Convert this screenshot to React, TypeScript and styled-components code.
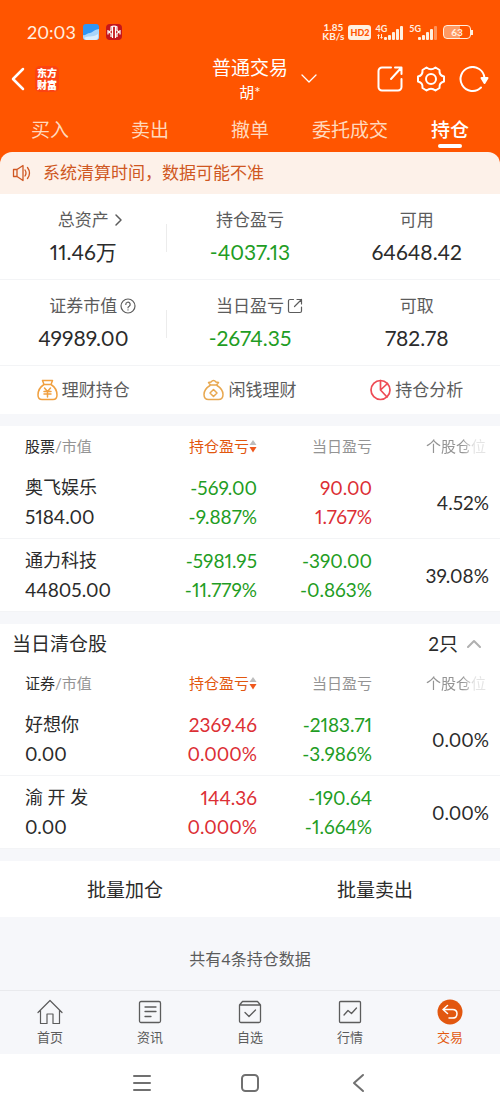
import React from 'react';
import styled, { createGlobalStyle, css } from 'styled-components';

const color = {
  brand: '#ff5500',
  accent: '#e2570f',
  ink: '#2b2b2b',
  sub: '#5c5c5c',
  muted: '#949494',
  up: '#dc2f35',
  down: '#1f9d24',
  page: '#f6f7fa',
  line: '#f3f4f6',
};

const GlobalStyle = createGlobalStyle`
  *, *::before, *::after { box-sizing: border-box; }
  body {
    margin: 0;
    background: #fff;
    color: ${color.ink};
    font-family: Lato, "Noto Sans CJK SC", sans-serif;
    font-variant-numeric: proportional-nums;
  }
  button {
    margin: 0;
    padding: 0;
    border: 0;
    background: none;
    color: inherit;
    font: inherit;
    cursor: pointer;
  }
  a { color: inherit; text-decoration: none; }
  svg { display: block; flex: none; }
`;

type Tone = 'up' | 'down' | 'plain';

const toneColor = (tone: Tone) =>
  tone === 'up' ? color.up : tone === 'down' ? color.down : color.ink;

const Page = styled.div`
  background: ${color.page};
`;

const Top = styled.header`
  background: ${color.brand};
  color: #fff;
  padding-bottom: 12px;
`;

const StatusBar = styled.div`
  display: flex;
  align-items: center;
  justify-content: space-between;
  height: 54px;
  padding: 10px 27px 0;
  color: #fff0e0;
`;

const StatusGroup = styled.div<{ $gap: number }>`
  display: flex;
  align-items: center;
  gap: ${(p) => p.$gap}px;
`;

const Clock = styled.time`
  font-size: 18px;
  line-height: 22px;
`;

const Speed = styled.span`
  font: 700 10px/9px Lato, sans-serif;
  text-align: center;
`;

const HdBadge = styled.span`
  padding: 0 2px;
  border-radius: 3px;
  background: #fff0e0;
  color: ${color.brand};
  font: 900 9px/15px Lato, sans-serif;
`;

const Signal = styled.span`
  display: flex;
  align-items: flex-start;
  height: 15px;
  font: 700 9px/8px Lato, sans-serif;

  svg { margin: 1px 0 0 -10px; }
`;

const Battery = styled.span`
  display: flex;
  align-items: center;

  &::after {
    content: '';
    width: 2px;
    height: 5px;
    background: #fff0e0;
  }
`;

const BatteryBody = styled.span`
  width: 28px;
  border: 1px solid #fff0e0;
  border-radius: 4px;
  background: linear-gradient(90deg, #ff9a63 63%, transparent 63%);
  font: 700 10px/12px Lato, sans-serif;
  text-align: center;
`;

const TitleBar = styled.div`
  display: grid;
  grid-template-columns: 1fr auto 1fr;
  align-items: center;
  height: 49px;
  padding: 0 11px;
`;

const TitleSide = styled.div`
  display: flex;
  align-items: center;
  gap: 10px;
`;

const Logo = styled.span`
  display: flex;
  flex-direction: column;
  padding: 1px 2px;
  border-radius: 5px;
  background: #fb4312;
  font: 900 10px/12px "Noto Sans CJK SC", sans-serif;
`;

const Title = styled.h1`
  margin: 0;
  font-size: 19px;
  font-weight: 400;
  line-height: 26px;
  text-align: center;
`;

const Account = styled.small`
  display: block;
  font-size: 15px;
  line-height: 22px;
`;

const TitleActions = styled.div`
  display: flex;
  align-items: center;
  gap: 14px;

  > :first-child { margin: 0 auto 0 13px; }
`;

const Tabs = styled.nav`
  display: grid;
  grid-template-columns: repeat(5, 1fr);
  padding-top: 13px;
`;

const Tab = styled.a<{ $active?: boolean }>`
  display: flex;
  flex-direction: column;
  align-items: center;
  height: 36px;
  color: ${(p) => (p.$active ? '#fff' : '#ffd9bd')};
  font-size: 19px;
  font-weight: ${(p) => (p.$active ? 500 : 400)};
  line-height: 28px;

  &::after {
    content: '';
    width: 24px;
    height: 4px;
    border-radius: 2px;
    background: ${(p) => (p.$active ? '#fff' : 'transparent')};
  }
`;

const Notice = styled.div`
  display: flex;
  align-items: center;
  gap: 12px;
  height: 42px;
  margin-top: -12px;
  padding: 0 12px;
  border-radius: 12px 12px 0 0;
  background: #fdf1e9;
  color: #cf5722;
  font-size: 17px;
  line-height: 24px;
`;

const Card = styled.section`
  margin-bottom: 12px;
  background: #fff;
`;

const SummaryRow = styled.div`
  display: grid;
  grid-template-columns: repeat(3, 1fr);
  height: 86px;
  padding-top: 13px;
  border-bottom: 1px solid ${color.line};
`;

const Metric = styled.div`
  position: relative;
  display: flex;
  flex-direction: column;
  align-items: center;

  &:first-child::after {
    content: '';
    position: absolute;
    top: 17px;
    right: 0;
    width: 1px;
    height: 28px;
    background: #ececec;
  }
`;

const MetricLabel = styled.span`
  display: flex;
  align-items: center;
  color: ${color.sub};
  font-size: 17px;
  line-height: 26px;

  svg { margin: 0 -19px 0 3px; }
`;

const MetricValue = styled.strong<{ $tone: Tone }>`
  margin-top: 4px;
  color: ${(p) => toneColor(p.$tone)};
  font-size: 21px;
  font-weight: 400;
  line-height: 30px;
`;

const Shortcuts = styled.nav`
  display: grid;
  grid-template-columns: repeat(3, 1fr);
  height: 48px;
`;

const Shortcut = styled.a`
  display: flex;
  align-items: center;
  justify-content: center;
  gap: 4px;
  color: ${color.sub};
  font-size: 17px;
  line-height: 24px;
`;

const GroupHeading = styled.div`
  display: flex;
  align-items: center;
  justify-content: space-between;
  height: 39px;
  padding: 0 19px 0 12px;
`;

const GroupTitle = styled.h2`
  margin: 0;
  font-size: 19px;
  font-weight: 400;
  line-height: 28px;
`;

const GroupToggle = styled.button`
  display: flex;
  align-items: center;
  gap: 9px;
  font-size: 19px;
  line-height: 28px;
`;

const Table = styled.table`
  width: 100%;
  table-layout: fixed;
  border-collapse: separate;
  border-spacing: 0;
`;

const cell = css`
  padding: 7px 0;
  font-weight: 400;
  text-align: right;
  white-space: nowrap;

  &:first-child { padding-left: 25px; text-align: left; }
  &:last-child { padding-right: 11px; }
`;

const HeadCell = styled.th<{ $width: string }>`
  ${cell}
  width: ${(p) => p.$width};
  height: 40px;
  color: ${color.muted};
  font-size: 15px;
  line-height: 26px;

  b { color: ${color.ink}; font-weight: 400; }
  &:last-child { padding-right: 14px; }
`;

const SortButton = styled.button`
  display: inline-flex;
  align-items: center;
  color: ${color.accent};
`;

const Faded = styled.span`
  mask-image: linear-gradient(90deg, #000 60%, rgba(0, 0, 0, 0.25) 80%);
`;

const Cell = styled.td<{ $tone?: Tone }>`
  ${cell}
  border-bottom: 1px solid ${color.line};
  color: ${(p) => toneColor(p.$tone ?? 'plain')};
  font-size: 19px;
  line-height: 29px;
`;

const Line = styled.div`
  line-height: 29px;
`;

const StockName = styled.div`
  font-size: 18px;
  line-height: 29px;
  white-space: pre;
`;

const BatchActions = styled.div`
  display: grid;
  grid-template-columns: 1fr 1fr;
  background: #fff;

  button {
    height: 56px;
    padding-bottom: 2px;
    font-size: 19px;
  }
`;

const Footnote = styled.p`
  margin: 0;
  padding: 30px 0 19px;
  color: ${color.sub};
  font-size: 16px;
  line-height: 24px;
  text-align: center;
`;

const BottomNav = styled.nav`
  display: grid;
  grid-template-columns: repeat(5, 1fr);
  border-top: 1px solid #e9eaed;
`;

const BottomItem = styled.a<{ $active?: boolean }>`
  display: flex;
  flex-direction: column;
  align-items: center;
  gap: 3px;
  height: 63px;
  padding-top: 8px;
  color: ${(p) => (p.$active ? color.accent : color.sub)};
  font-size: 13px;
  line-height: 18px;
`;

const SystemNav = styled.div`
  display: flex;
  align-items: center;
  justify-content: center;
  gap: 88px;
  height: 57px;
  background: #fff;
  color: #707070;
`;

const Icon = ({
  w,
  h = w,
  sw = 1.5,
  stroke = 'currentColor',
  children,
}: {
  w: number;
  h?: number;
  sw?: number;
  stroke?: string;
  children: React.ReactNode;
}) => (
  <svg
    width={w}
    height={h}
    viewBox={`0 0 ${w} ${h}`}
    fill="none"
    stroke={stroke}
    strokeWidth={sw}
    strokeLinecap="round"
    strokeLinejoin="round"
    aria-hidden="true"
  >
    {children}
  </svg>
);

const WeatherIcon = () => (
  <svg width="16" height="16" viewBox="0 0 16 16" aria-hidden="true">
    <rect width="16" height="16" rx="3" fill="#2f95f3" />
    <path d="M0 11c3 1 4-2 7-2 2 0 3-3 9-4v8a3 3 0 0 1-3 3H3a3 3 0 0 1-3-3z" fill="#a9d5fa" />
    <path d="M1 14c4-3 8 0 14-4v3a3 3 0 0 1-3 3H3z" fill="#dceefc" />
  </svg>
);

const BankIcon = () => (
  <svg width="16" height="16" viewBox="0 0 16 16" fill="none" stroke="#fff" aria-hidden="true">
    <rect width="16" height="16" rx="4" fill="#c4161c" stroke="none" />
    <path d="M6.500 3v11M9.500 3v11M5 3.500v3L3 8l2 1.500V13M11 3.500v3L13 8l-2 1.500V13M2 6v4.500M14 6v4.500M4.500 3.200q3.500-2 7 0" strokeWidth="1.200" />
  </svg>
);

const SignalBars = ({ weak }: { weak?: boolean }) => (
  <svg width="28" height="14" viewBox="0 0 28 14" fill="#fff0e0" aria-hidden="true">
    <rect x="7" y="11" width="3" height="3" rx="1" />
    <rect x="11" y="9" width="3" height="5" rx="1" />
    <rect x="15" y="6" width="3" height="8" rx="1" />
    <rect x="19" y="3" width="3" height="11" rx="1" />
    <rect x="23" y="0" width="3" height="14" rx="1" opacity={weak ? 0.4 : 1} />
    {!weak && <path d="M0 10l1.500-2L3 10H2v3H1v-3zM3 11h1V8h1v3h1l-1.500 2z" />}
  </svg>
);

const SortIcon = () => (
  <svg width="8" height="16" viewBox="0 0 8 16" aria-hidden="true">
    <path d="M4 2l3.500 5h-7z" fill="#bdbdbd" />
    <path d="M.5 9h7L4 14.500z" fill="#f0571c" />
  </svg>
);

type Pair = { value: string; rate: string; tone: Tone };
type Holding = { name: string; market: string; total: Pair; day: Pair; share: string };

const holdings: Holding[] = [
  {
    name: '奥飞娱乐',
    market: '5184.00',
    total: { value: '-569.00', rate: '-9.887%', tone: 'down' },
    day: { value: '90.00', rate: '1.767%', tone: 'up' },
    share: '4.52%',
  },
  {
    name: '通力科技',
    market: '44805.00',
    total: { value: '-5981.95', rate: '-11.779%', tone: 'down' },
    day: { value: '-390.00', rate: '-0.863%', tone: 'down' },
    share: '39.08%',
  },
];

const cleared: Holding[] = [
  {
    name: '好想你',
    market: '0.00',
    total: { value: '2369.46', rate: '0.000%', tone: 'up' },
    day: { value: '-2183.71', rate: '-3.986%', tone: 'down' },
    share: '0.00%',
  },
  {
    name: '渝 开 发',
    market: '0.00',
    total: { value: '144.36', rate: '0.000%', tone: 'up' },
    day: { value: '-190.64', rate: '-1.664%', tone: 'down' },
    share: '0.00%',
  },
];

const PairCell = ({ pair }: { pair: Pair }) => (
  <Cell $tone={pair.tone}>
    <Line>{pair.value}</Line>
    <Line>{pair.rate}</Line>
  </Cell>
);

const HoldingTable = ({ kind, rows }: { kind: string; rows: Holding[] }) => (
  <Table>
    <thead>
      <tr>
        <HeadCell $width="30%"><b>{kind}</b>/市值</HeadCell>
        <HeadCell $width="21.4%">
          <SortButton>持仓盈亏<SortIcon /></SortButton>
        </HeadCell>
        <HeadCell $width="23%">当日盈亏</HeadCell>
        <HeadCell $width="25.6%"><Faded>个股仓位</Faded></HeadCell>
      </tr>
    </thead>
    <tbody>
      {rows.map((row) => (
        <tr key={row.name}>
          <Cell>
            <StockName>{row.name}</StockName>
            <Line>{row.market}</Line>
          </Cell>
          <PairCell pair={row.total} />
          <PairCell pair={row.day} />
          <Cell>{row.share}</Cell>
        </tr>
      ))}
    </tbody>
  </Table>
);

const tabs = ['买入', '卖出', '撤单', '委托成交', '持仓'];

export default function App() {
  return (
    <Page>
      <GlobalStyle />
      <Top>
        <StatusBar>
          <StatusGroup $gap={7}>
            <Clock>20:03</Clock>
            <WeatherIcon />
            <BankIcon />
          </StatusGroup>
          <StatusGroup $gap={4}>
            <Speed>1.85<br />KB/s</Speed>
            <HdBadge>HD2</HdBadge>
            <Signal>4G<SignalBars /></Signal>
            <Signal>5G<SignalBars weak /></Signal>
            <Battery><BatteryBody>63</BatteryBody></Battery>
          </StatusGroup>
        </StatusBar>
        <TitleBar>
          <TitleSide>
            <button aria-label="返回">
              <Icon w={14} h={24} sw={2.5}><path d="M12 2L2 12l10 10" /></Icon>
            </button>
            <Logo><span>东方</span><span>财富</span></Logo>
          </TitleSide>
          <Title>普通交易<Account>胡*</Account></Title>
          <TitleActions>
            <button aria-label="切换账户">
              <Icon w={16} h={10} sw={1.3}><path d="M1 1l7 7 7-7" /></Icon>
            </button>
            <button aria-label="分享">
              <Icon w={26} sw={2}>
                <path d="M14 1.500H5A3.500 3.500 0 0 0 1.500 5v16A3.500 3.500 0 0 0 5 24.500h16a3.500 3.500 0 0 0 3.500-3.500v-8M14 13L24 2M18 1.500h6.500V8" />
              </Icon>
            </button>
            <button aria-label="设置">
              <Icon w={28} h={26} sw={2}>
                <path d="M9.500 1.500Q14 5 18.500 1.500L22.500 4Q22 9.500 27 10.500V15.500Q22 16.500 22.500 22L18.500 24.500Q14 21 9.500 24.500L5.500 22Q6 16.500 1 15.500V10.500Q6 9.500 5.500 4Z" />
                <circle cx="14" cy="13" r="5" />
              </Icon>
            </button>
            <button aria-label="刷新">
              <Icon w={30} h={26} sw={2}>
                <path d="M22 21.500A12 12 0 1 1 25.500 12" />
                <path d="M22.500 12h6l-3 5z" fill="currentColor" />
              </Icon>
            </button>
          </TitleActions>
        </TitleBar>
        <Tabs>
          {tabs.map((tab) => (
            <Tab key={tab} href="#" $active={tab === '持仓'}>{tab}</Tab>
          ))}
        </Tabs>
      </Top>

      <Notice>
        <Icon w={19} h={18} sw={1.3}>
          <path d="M1.500 5.500h3.500L11 1.500v15l-6-4H1.500zM5 5.500v7M13 6q2 3 0 6M15.500 3.500q4 5.500 0 11" />
        </Icon>
        系统清算时间，数据可能不准
      </Notice>

      <Card>
        <SummaryRow>
          <Metric>
            <MetricLabel>
              总资产
              <Icon w={16}><path d="M4 3l5 5-5 5" /></Icon>
            </MetricLabel>
            <MetricValue $tone="plain">11.46万</MetricValue>
          </Metric>
          <Metric>
            <MetricLabel>持仓盈亏</MetricLabel>
            <MetricValue $tone="down">-4037.13</MetricValue>
          </Metric>
          <Metric>
            <MetricLabel>可用</MetricLabel>
            <MetricValue $tone="plain">64648.42</MetricValue>
          </Metric>
        </SummaryRow>
        <SummaryRow>
          <Metric>
            <MetricLabel>
              证券市值
              <Icon w={16} sw={1.2}>
                <circle cx="8" cy="8" r="7" />
                <path d="M5.800 6.500a2.200 2.200 0 1 1 3.400 1.700q-1.200.7-1.200 1.600M8 11.800v.2" />
              </Icon>
            </MetricLabel>
            <MetricValue $tone="plain">49989.00</MetricValue>
          </Metric>
          <Metric>
            <MetricLabel>
              当日盈亏
              <Icon w={16} sw={1.2}>
                <path d="M6.500 1.500H3A1.500 1.500 0 0 0 1.500 3v10A1.500 1.500 0 0 0 3 14.500h10a1.500 1.500 0 0 0 1.500-1.500V9M7.500 8.500l7-7M10 1.500h4.500V6" />
              </Icon>
            </MetricLabel>
            <MetricValue $tone="down">-2674.35</MetricValue>
          </Metric>
          <Metric>
            <MetricLabel>可取</MetricLabel>
            <MetricValue $tone="plain">782.78</MetricValue>
          </Metric>
        </SummaryRow>
        <Shortcuts>
          <Shortcut href="#">
            <Icon w={21} h={22} stroke="#f0a040">
              <path d="M5.500 1.500h10l-1.500 4H7zM7 5.500C3 8 1 12 1 16q0 4.500 4 4.500h11q4 0 4-4.500c0-4-2-8-6-10.500" />
              <path d="M7.500 9l3 3.500 3-3.500M7 12.500h7M7 15h7M10.500 12.500V18" />
            </Icon>
            理财持仓
          </Shortcut>
          <Shortcut href="#">
            <Icon w={21} h={22} stroke="#e8a850">
              <path d="M7.500 6L5.500 3.500 8 3q2.500-3 5 0l2.500.5-2 2.500zM7 6.500C3 9 1 12 1 15.500q0 5 4.500 5h10q4.500 0 4.500-5c0-3.500-2-6.500-6-9M10.500 10.500L14 14l-3.500 3.500L7 14z" />
            </Icon>
            闲钱理财
          </Shortcut>
          <Shortcut href="#">
            <Icon w={21} h={22} stroke="#ee4b55" sw={1.7}>
              <circle cx="10.500" cy="11" r="9.500" />
              <path d="M10.500 1.500V11l6.500 7M10.500 11l7-6.500" />
            </Icon>
            持仓分析
          </Shortcut>
        </Shortcuts>
      </Card>

      <Card>
        <HoldingTable kind="股票" rows={holdings} />
      </Card>

      <Card>
        <GroupHeading>
          <GroupTitle>当日清仓股</GroupTitle>
          <GroupToggle aria-expanded="true">
            2只
            <Icon w={14} h={9} stroke="#b0b0b0" sw={2}><path d="M1 8l6-6 6 6" /></Icon>
          </GroupToggle>
        </GroupHeading>
        <HoldingTable kind="证券" rows={cleared} />
      </Card>

      <BatchActions>
        <button>批量加仓</button>
        <button>批量卖出</button>
      </BatchActions>
      <Footnote>共有4条持仓数据</Footnote>

      <BottomNav>
        <BottomItem href="#">
          <Icon w={26} sw={1.2}>
            <path d="M1 13.500L13 1.500l12 12M3.500 11v13.500H10V15h6v9.500h6.500V11" />
          </Icon>
          首页
        </BottomItem>
        <BottomItem href="#">
          <Icon w={26} sw={1.3}>
            <rect x="2.500" y="2.500" width="21" height="21" rx="1.500" />
            <path d="M8 8h11M8 12.500h11M8 17.500h6" />
          </Icon>
          资讯
        </BottomItem>
        <BottomItem href="#">
          <Icon w={26} sw={1.3}>
            <path d="M2.500 6l3-3.500h15l3 3.500v16q0 1.500-1.500 1.500H4q-1.500 0-1.500-1.500zM2.500 6h21M8 13.500l4 4 6.500-6.500" />
          </Icon>
          自选
        </BottomItem>
        <BottomItem href="#">
          <Icon w={26} sw={1.3}>
            <rect x="2.500" y="2.500" width="21" height="21" rx="1" />
            <path d="M7 16l4-4.500 3.500 3L19.500 9" />
          </Icon>
          行情
        </BottomItem>
        <BottomItem href="#" $active>
          <Icon w={26} stroke="#fff">
            <circle cx="13" cy="13" r="12.500" fill={color.accent} stroke="none" />
            <path d="M10.500 6.500L6 10.500l4.500 4M6 10.500h9.500q4.500 0 4.500 4.300t-4.500 4.300H12" />
          </Icon>
          交易
        </BottomItem>
      </BottomNav>

      <SystemNav>
        <button aria-label="最近任务">
          <Icon w={20} sw={2}><path d="M2 3h16M2 10h16M2 17h16" /></Icon>
        </button>
        <button aria-label="主屏幕">
          <Icon w={20} sw={2}><rect x="2" y="2" width="16" height="16" rx="3.500" /></Icon>
        </button>
        <button aria-label="后退">
          <Icon w={20} sw={2}><path d="M15 2L6 10l9 8" /></Icon>
        </button>
      </SystemNav>
    </Page>
  );
}
